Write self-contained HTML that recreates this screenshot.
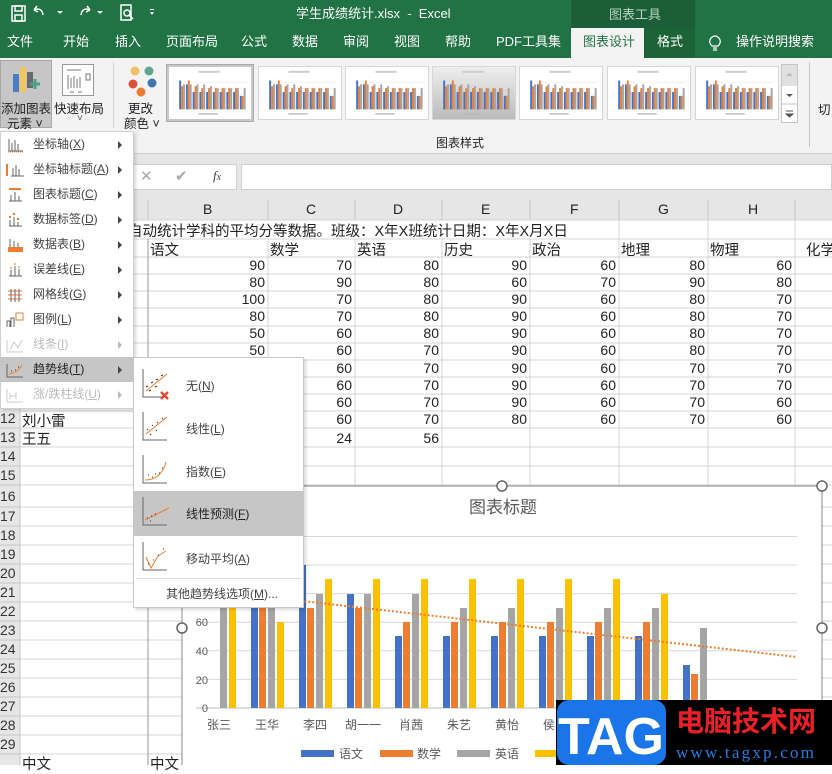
<!DOCTYPE html>
<html><head><meta charset="utf-8"><style>
*{margin:0;padding:0;box-sizing:border-box}
body{width:832px;height:765px;overflow:hidden;position:relative;background:#fff;font-family:"Liberation Sans","Noto Sans CJK SC",sans-serif;color:#222}
.a{position:absolute;white-space:nowrap}
.tab{position:absolute;top:28px;height:30px;line-height:28px;color:#fff;font-size:13px}
.mi{position:absolute;left:0;width:133px;height:25px;font-size:12px;color:#444;line-height:25px}
.mi span.t{position:absolute;left:33px}
.mi .ar{position:absolute;left:118px;top:9px;width:0;height:0;border-left:4px solid #444;border-top:4px solid transparent;border-bottom:4px solid transparent}
.mi svg{position:absolute;left:5px;top:5px}
.si{position:absolute;left:0;width:170px;height:42px;font-size:12px;color:#444}
.si span{position:absolute;left:52px;top:14px}
.si svg{position:absolute;left:8px;top:5px}
.th{position:absolute;top:66px;width:84px;height:54px;border:1px solid #d6d6d6;background:#fff}
</style></head><body>
<div class="a" style="left:0;top:0;width:832px;height:58px;background:#217346"></div>
<div class="a" style="left:571px;top:0;width:124px;height:28px;background:#1b5e37"></div>
<div class="a" style="left:609px;top:4px;font-size:13px;color:#b9d3c2">图表工具</div>
<div class="a" style="left:296px;top:3px;font-size:13px;color:#fff">学生成绩统计.xlsx &nbsp;- &nbsp;Excel</div>
<svg class="a" style="left:0;top:0" width="170" height="28">
<g stroke="#fff" fill="none" stroke-width="1.5"><rect x="12" y="6" width="13" height="15"/><rect x="15" y="6" width="7" height="5"/><rect x="15" y="15" width="7" height="6"/>
<path d="M34 10 q8 -3 9 5 M34 10 l3 -4 M34 10 l4 2"/><path d="M90 10 q-8 -3 -9 5 M90 10 l-3 -4 M90 10 l-4 2"/>
<rect x="121" y="5" width="10" height="15"/><circle cx="127" cy="13" r="3"/><path d="M129 15 l4 4"/></g>
<g fill="#fff"><path d="M57 11 l3 3 l3 -3z M97 11 l3 3 l3 -3z M150 12 l4 0 l-2 3z"/><rect x="150" y="9" width="4" height="1"/></g></svg>
<div class="a" style="left:571px;top:28px;width:73px;height:30px;background:#f3f3f3"></div>
<div class="a" style="left:644px;top:28px;width:51px;height:30px;background:#1d6338"></div>
<div class="tab" style="left:7px">文件</div><div class="tab" style="left:63px">开始</div><div class="tab" style="left:115px">插入</div>
<div class="tab" style="left:166px">页面布局</div><div class="tab" style="left:241px">公式</div><div class="tab" style="left:292px">数据</div>
<div class="tab" style="left:343px">审阅</div><div class="tab" style="left:394px">视图</div><div class="tab" style="left:445px">帮助</div>
<div class="tab" style="left:496px">PDF工具集</div><div class="tab" style="left:583px;color:#217346">图表设计</div><div class="tab" style="left:657px">格式</div>
<svg class="a" style="left:708px;top:34px" width="14" height="18"><g stroke="#fff" fill="none" stroke-width="1.2"><path d="M4 12 q-4-4 -1-8 q4-4 8 0 q3 4 -1 8z M5 14h4 M5 16h4"/></g></svg>
<div class="tab" style="left:736px">操作说明搜索</div>
<div class="a" style="left:0;top:58px;width:832px;height:96px;background:#f3f3f3"></div>
<div class="a" style="left:0;top:60px;width:52px;height:68px;background:#c6c6c6;border:1px solid #a8a8a8"></div>
<svg class="a" style="left:8px;top:62px" width="36" height="36"><rect x="5" y="12" width="6" height="18" fill="#4a7ebf"/><rect x="12" y="5" width="6" height="25" fill="#f0c75e"/><rect x="19" y="10" width="6" height="16" fill="#6a6a6a"/><path d="M22 22h10 M27 17v10" stroke="#4aa08a" stroke-width="3"/></svg>
<div class="a" style="left:1px;top:98px;font-size:12.5px">添加图表</div><div class="a" style="left:7px;top:113px;font-size:12.5px">元素 ˅</div>
<div class="a" style="left:62px;top:64px;width:32px;height:32px;background:#fff;border:1px solid #999"></div>
<svg class="a" style="left:62px;top:64px" width="32" height="32"><g stroke="#777" fill="none"><path d="M5 6h14 M6 11v14 M9 14v10 M12 12v12 M15 15v9 M18 13v11 M24 10h4v6h-4z M8 28h4 M16 28h4"/></g></svg>
<div class="a" style="left:54px;top:98px;font-size:12.5px">快速布局</div><div class="a" style="left:77px;top:113px;font-size:10px;color:#555">˅</div>
<div class="a" style="left:113px;top:62px;width:1px;height:66px;background:#d4d4d4"></div>
<svg class="a" style="left:126px;top:64px" width="34" height="34"><circle cx="9" cy="7" r="4.5" fill="#f0c068"/><circle cx="23" cy="7" r="4.5" fill="#5fa58f"/><circle cx="7" cy="20" r="4.5" fill="#d9533a"/><circle cx="26" cy="19" r="4.5" fill="#3f74b5"/><circle cx="15" cy="28" r="4.5" fill="#ed7d31"/></svg>
<div class="a" style="left:128px;top:98px;font-size:12.5px">更改</div><div class="a" style="left:124px;top:113px;font-size:12.5px">颜色 ˅</div>
<svg width="0" height="0" style="position:absolute"><defs><symbol id="tb" viewBox="0 0 84 54"><g stroke="#e4e4e4" stroke-width=".5"><path d="M8 16h72 M8 22h72 M8 28h72 M8 34h72 M8 40h72"/></g><rect x="30" y="4" width="22" height="2" fill="#ccc"/><g fill="#4472c4"><rect x="10" y="14" width="2" height="30"/><rect x="17" y="18" width="2" height="26"/><rect x="24" y="26" width="2" height="18"/><rect x="31" y="26" width="2" height="18"/><rect x="38" y="26" width="2" height="18"/><rect x="45" y="26" width="2" height="18"/><rect x="52" y="26" width="2" height="18"/><rect x="59" y="26" width="2" height="18"/><rect x="66" y="26" width="2" height="18"/><rect x="73" y="30" width="2" height="14"/></g><g fill="#ed7d31"><rect x="12" y="20" width="2" height="24"/><rect x="19" y="14" width="2" height="30"/><rect x="26" y="20" width="2" height="24"/><rect x="33" y="22" width="2" height="22"/><rect x="40" y="22" width="2" height="22"/><rect x="47" y="22" width="2" height="22"/><rect x="54" y="22" width="2" height="22"/><rect x="61" y="22" width="2" height="22"/><rect x="68" y="22" width="2" height="22"/><rect x="75" y="30" width="2" height="14"/></g><g fill="#a5a5a5"><rect x="14" y="18" width="2" height="26"/><rect x="21" y="18" width="2" height="26"/><rect x="28" y="18" width="2" height="26"/><rect x="35" y="18" width="2" height="26"/><rect x="42" y="20" width="2" height="24"/><rect x="49" y="22" width="2" height="22"/><rect x="56" y="22" width="2" height="22"/><rect x="63" y="22" width="2" height="22"/><rect x="70" y="22" width="2" height="22"/><rect x="77" y="22" width="2" height="22"/></g><rect x="30" y="48" width="20" height="1.5" fill="#bbb"/></symbol></defs></svg>
<div class="th" style="left:166px;width:88px;height:58px;top:64px;background:#c8c8c8;border-color:#aaa"></div>
<svg class="a" style="left:169px;top:67px;background:#fff" width="82" height="52"><use href="#tb"/></svg>
<svg class="th" style="left:258px"><use href="#tb"/></svg>
<svg class="th" style="left:345px"><use href="#tb"/></svg>
<svg class="th" style="left:432px;background:linear-gradient(#eee,#bbb)"><use href="#tb"/></svg>
<svg class="th" style="left:519px"><use href="#tb"/></svg>
<svg class="th" style="left:607px"><use href="#tb"/></svg>
<svg class="th" style="left:695px"><use href="#tb"/></svg>
<div class="a" style="left:781px;top:64px;width:17px;height:59px;border:1px solid #c6c6c6;background:#fff"></div>
<div class="a" style="left:782px;top:65px;width:15px;height:19px;background:#e0e0e0"></div>
<svg class="a" style="left:781px;top:64px" width="17" height="59"><path d="M5 12l3.5-3 3.5 3z" fill="#bbb"/><path d="M5 30l3.5 3 3.5-3z" fill="#555"/><path d="M5 47h7 M5 50l3.5 3 3.5-3z" stroke="#555" fill="#555"/><path d="M0 40h17 M0 21h17" stroke="#c6c6c6"/></svg>
<div class="a" style="left:809px;top:62px;width:1px;height:85px;background:#c6c6c6"></div>
<div class="a" style="left:818px;top:99px;font-size:12.5px">切</div>
<div class="a" style="left:436px;top:134px;font-size:12px">图表样式</div>
<div class="a" style="left:0;top:153px;width:832px;height:10px;background:#e6e6e6;border-top:1px solid #d0d0d0"></div>
<div class="a" style="left:0;top:163px;width:832px;height:37px;background:#e6e6e6"></div>
<div class="a" style="left:133px;top:164px;width:104px;height:26px;background:#fff;border:1px solid #d0d0d0"></div>
<div class="a" style="left:140px;top:167px;font-size:15px;color:#aaa">✕</div>
<div class="a" style="left:175px;top:167px;font-size:15px;color:#aaa">✔</div>
<div class="a" style="left:213px;top:168px;font-size:13px;font-style:italic;font-family:'Liberation Serif',serif;color:#444">f<span style="font-size:10px">x</span></div>
<div class="a" style="left:241px;top:164px;width:591px;height:26px;background:#fff;border:1px solid #d0d0d0"></div>
<div class="a" style="left:0;top:200px;width:832px;height:20px;background:#e6e6e6"></div>
<div class="a" style="left:0;top:200px;width:20px;height:565px;background:#e6e6e6"></div>
<svg class="a" style="left:0;top:0" width="832" height="765">
<g stroke="#d4d4d4" stroke-width="1">
<path d="M20 239H832 M20 257H832 M20 274H832 M20 291H832 M20 308H832 M20 326H832 M20 343H832 M20 360H832 M20 377H832 M20 394H832 M20 411H832 M20 428H832 M20 447H832 M20 466H832 M20 485H832 M20 507H832 M20 526H832 M20 545H832 M20 564H832 M20 583H832 M20 602H832 M20 621H832 M20 640H832 M20 659H832 M20 678H832 M20 697H832 M20 716H832 M20 735H832 M20 754H832"/>
<path d="M268 239V765 M355 239V765 M442 239V765 M530 239V765 M619 220V765 M708 220V765 M795 220V765 M148 239V765"/>
<path d="M20 220H832"/>
</g>
<g stroke="#c6c6c6"><path d="M148 200V220 M268 200V220 M355 200V220 M442 200V220 M530 200V220 M619 200V220 M708 200V220 M795 200V220"/>
<path d="M0 466H20 M0 485H20 M0 507H20 M0 526H20 M0 545H20 M0 564H20 M0 583H20 M0 602H20 M0 621H20 M0 640H20 M0 659H20 M0 678H20 M0 697H20 M0 716H20 M0 735H20 M0 754H20 M0 428H20 M0 447H20 M20 200V765"/></g>
<path d="M148 239V765" stroke="#9a9a9a"/>
</svg>
<div class="a" style="font-size:14px;top:201px;left:203px">B</div><div class="a" style="font-size:14px;top:201px;left:306px">C</div><div class="a" style="font-size:14px;top:201px;left:393px">D</div><div class="a" style="font-size:14px;top:201px;left:481px">E</div><div class="a" style="font-size:14px;top:201px;left:570px">F</div><div class="a" style="font-size:14px;top:201px;left:658px">G</div><div class="a" style="font-size:14px;top:201px;left:748px">H</div>
<div class="a" style="font-size:14.5px;top:220px;left:128px">自动统计学科的平均分等数据。班级：X年X班统计日期：X年X月X日</div>
<div class="a" style="font-size:14.5px;top:239px;left:150px">语文</div><div class="a" style="font-size:14.5px;top:239px;left:270px">数学</div><div class="a" style="font-size:14.5px;top:239px;left:357px">英语</div><div class="a" style="font-size:14.5px;top:239px;left:444px">历史</div><div class="a" style="font-size:14.5px;top:239px;left:532px">政治</div><div class="a" style="font-size:14.5px;top:239px;left:621px">地理</div><div class="a" style="font-size:14.5px;top:239px;left:710px">物理</div><div class="a" style="font-size:14.5px;top:239px;left:806px">化学</div>
<div class="a" style="left:148px;top:257px;width:120px;font-size:14px;text-align:right;padding-right:3px;line-height:17.1px">90<br>80<br>100<br>80<br>50<br>50</div>
<div class="a" style="left:268px;top:257px;width:87px;font-size:14px;text-align:right;padding-right:3px;line-height:17.1px">70<br>90<br>70<br>70<br>60<br>60<br>60<br>60<br>60<br>60<br><span style="line-height:20px">24</span></div>
<div class="a" style="left:355px;top:257px;width:87px;font-size:14px;text-align:right;padding-right:3px;line-height:17.1px">80<br>80<br>80<br>80<br>80<br>70<br>70<br>70<br>70<br>70<br><span style="line-height:20px">56</span></div>
<div class="a" style="left:442px;top:257px;width:88px;font-size:14px;text-align:right;padding-right:3px;line-height:17.1px">90<br>60<br>90<br>90<br>90<br>90<br>90<br>90<br>90<br>80</div>
<div class="a" style="left:530px;top:257px;width:89px;font-size:14px;text-align:right;padding-right:3px;line-height:17.1px">60<br>70<br>60<br>60<br>60<br>60<br>60<br>60<br>60<br>60</div>
<div class="a" style="left:619px;top:257px;width:89px;font-size:14px;text-align:right;padding-right:3px;line-height:17.1px">80<br>90<br>80<br>80<br>80<br>80<br>70<br>70<br>70<br>70</div>
<div class="a" style="left:708px;top:257px;width:87px;font-size:14px;text-align:right;padding-right:3px;line-height:17.1px">60<br>80<br>70<br>70<br>70<br>70<br>70<br>70<br>60<br>60</div>
<div class="a" style="left:22px;top:410px;font-size:14.5px">刘小雷</div><div class="a" style="left:22px;top:428px;font-size:14.5px">王五</div>
<div class="a" style="left:22px;top:753px;font-size:14.5px">中文</div><div class="a" style="left:150px;top:753px;font-size:14.5px">中文</div>
<div class="a" style="left:0;top:409px;font-size:14px;line-height:19px;width:20px;overflow:hidden;color:#333">12<br>13<br>14<br>15<br><span style="line-height:22px">16</span><br>17<br>18<br>19<br>20<br>21<br>22<br>23<br>24<br>25<br>26<br>27<br>28<br>29</div>
<svg class="a" style="left:0;top:0" width="832" height="765">
<rect x="182" y="486" width="640" height="290" fill="#fff" stroke="#8a8a8a"/>
<text x="503" y="513" font-size="17" fill="#595959" text-anchor="middle" font-family="Liberation Sans,Noto Sans CJK SC,sans-serif">图表标题</text>
<g stroke="#d9d9d9"><path d="M196 536.5H797 M196 565H797 M196 593.6H797 M196 622.2H797 M196 650.8H797 M196 679.4H797"/></g>
<path d="M196 708H797" stroke="#bfbfbf"/>
<g font-size="11" fill="#595959" text-anchor="end" font-family="Liberation Sans,sans-serif"><text x="208" y="712">0</text><text x="208" y="684">20</text><text x="208" y="655">40</text><text x="208" y="626">60</text></g>
<g fill="#4472c4"><rect x="251" y="594" width="7" height="114"/><rect x="299" y="565" width="7" height="143"/><rect x="347" y="594" width="7" height="114"/><rect x="395" y="636" width="7" height="72"/><rect x="443" y="636" width="7" height="72"/><rect x="491" y="636" width="7" height="72"/><rect x="539" y="636" width="7" height="72"/><rect x="587" y="636" width="7" height="72"/><rect x="635" y="636" width="7" height="72"/><rect x="683" y="665" width="7" height="43"/></g>
<g fill="#ed7d31"><rect x="259" y="579" width="7" height="129"/><rect x="307" y="608" width="7" height="100"/><rect x="355" y="608" width="7" height="100"/><rect x="403" y="622" width="7" height="86"/><rect x="451" y="622" width="7" height="86"/><rect x="499" y="622" width="7" height="86"/><rect x="547" y="622" width="7" height="86"/><rect x="595" y="622" width="7" height="86"/><rect x="643" y="622" width="7" height="86"/><rect x="691" y="674" width="7" height="34"/></g>
<g fill="#a5a5a5"><rect x="220" y="608" width="7" height="100"/><rect x="268" y="594" width="7" height="114"/><rect x="316" y="594" width="7" height="114"/><rect x="364" y="594" width="7" height="114"/><rect x="412" y="594" width="7" height="114"/><rect x="460" y="608" width="7" height="100"/><rect x="508" y="608" width="7" height="100"/><rect x="556" y="608" width="7" height="100"/><rect x="604" y="608" width="7" height="100"/><rect x="652" y="608" width="7" height="100"/><rect x="700" y="628" width="7" height="80"/></g>
<g fill="#ffc000"><rect x="229" y="608" width="7" height="100"/><rect x="277" y="622" width="7" height="86"/><rect x="325" y="579" width="7" height="129"/><rect x="373" y="579" width="7" height="129"/><rect x="421" y="579" width="7" height="129"/><rect x="469" y="579" width="7" height="129"/><rect x="517" y="579" width="7" height="129"/><rect x="565" y="579" width="7" height="129"/><rect x="613" y="579" width="7" height="129"/><rect x="661" y="594" width="7" height="114"/></g>
<path d="M205 590 L797 657" stroke="#ed7d31" stroke-width="2" stroke-dasharray="2 2"/>
<g font-size="12" fill="#595959" text-anchor="middle" font-family="Liberation Sans,Noto Sans CJK SC,sans-serif"><text x="219" y="729">张三</text><text x="267" y="729">王华</text><text x="315" y="729">李四</text><text x="363" y="729">胡一一</text><text x="411" y="729">肖茜</text><text x="459" y="729">朱艺</text><text x="507" y="729">黄怡</text><text x="555" y="729">侯小</text></g>
<rect x="301" y="750" width="33" height="7" fill="#4472c4"/><rect x="380" y="750" width="33" height="7" fill="#ed7d31"/><rect x="457" y="750" width="33" height="7" fill="#a5a5a5"/><rect x="535" y="750" width="33" height="7" fill="#ffc000"/>
<g font-size="12" fill="#595959" font-family="Liberation Sans,Noto Sans CJK SC,sans-serif"><text x="339" y="758">语文</text><text x="417" y="758">数学</text><text x="495" y="758">英语</text></g>
<g fill="#fff" stroke="#666" stroke-width="1.5"><circle cx="502" cy="486" r="5"/><circle cx="822" cy="486" r="5"/><circle cx="182" cy="628" r="5"/><circle cx="822" cy="628" r="5"/></g>
<rect x="556" y="700" width="276" height="65" fill="#000"/>
<rect x="557" y="700" width="109" height="65" rx="12" fill="#1a75e8"/>
<text x="611" y="754" font-size="52" font-weight="bold" fill="#fff" text-anchor="middle" font-family="Liberation Sans,sans-serif">TAG</text>
<text x="676" y="731" font-size="28" font-weight="bold" fill="#e8202a" font-family="Noto Sans CJK SC,sans-serif">电脑技术网</text>
<text x="676" y="758" font-size="17" fill="#2a7de0" font-family="Liberation Serif,serif" textLength="138">www.tagxp.com</text>
</svg>
<div class="a" style="left:0;top:131px;width:134px;height:278px;background:#fff;border:1px solid #d0d0d0;box-shadow:2px 2px 3px rgba(0,0,0,.15)"></div>
<div class="mi" style="top:132px"><svg width="20" height="16"><path d="M4 2v12h14 M7 6v8 M10 3v11 M13 7v7" stroke="#666" fill="none"/><path d="M3 15h15" stroke="#ed7d31" stroke-dasharray="1 1"/></svg><span class="t">坐标轴(<u>X</u>)</span><i class="ar"></i></div>
<div class="mi" style="top:157px"><svg width="20" height="16"><path d="M2 2v12" stroke="#ed7d31" stroke-width="2"/><path d="M6 14h13 M8 6v8 M11 3v11 M14 7v7" stroke="#666" fill="none"/></svg><span class="t">坐标轴标题(<u>A</u>)</span><i class="ar"></i></div>
<div class="mi" style="top:182px"><svg width="20" height="16"><path d="M4 2h12" stroke="#ed7d31" stroke-width="2"/><path d="M4 14h13 M6 8v6 M10 5v9 M14 9v5" stroke="#666" fill="none"/></svg><span class="t">图表标题(<u>C</u>)</span><i class="ar"></i></div>
<div class="mi" style="top:207px"><svg width="20" height="16"><path d="M5 4v2 M9 1v2 M13 6v2" stroke="#ed7d31" stroke-width="2"/><path d="M4 14h13 M5 8v6 M9 5v9 M13 10v4" stroke="#666" fill="none"/></svg><span class="t">数据标签(<u>D</u>)</span><i class="ar"></i></div>
<div class="mi" style="top:232px"><svg width="20" height="16"><path d="M3 10h15v5H3z" fill="#ed7d31"/><path d="M5 10V2 M9 10V4 M13 10V6" stroke="#666"/></svg><span class="t">数据表(<u>B</u>)</span><i class="ar"></i></div>
<div class="mi" style="top:257px"><svg width="20" height="16"><path d="M4 14h13 M6 8v6 M10 4v10 M14 7v7" stroke="#666" fill="none"/><path d="M5 6h2 M9 2h2 M13 5h2" stroke="#ed7d31"/></svg><span class="t">误差线(<u>E</u>)</span><i class="ar"></i></div>
<div class="mi" style="top:282px"><svg width="20" height="16"><path d="M3 4h14 M3 8h14 M3 12h14" stroke="#ed7d31"/><path d="M6 2v13 M10 2v13 M14 2v13" stroke="#666"/></svg><span class="t">网格线(<u>G</u>)</span><i class="ar"></i></div>
<div class="mi" style="top:307px"><svg width="20" height="16"><path d="M2 15V9h3v6 M6 15V6h3v9" stroke="#666" fill="none"/><rect x="11" y="1" width="7" height="7" fill="#fff" stroke="#ed7d31"/></svg><span class="t">图例(<u>L</u>)</span><i class="ar"></i></div>
<div class="mi" style="top:332px;color:#bbb"><svg width="20" height="16"><path d="M2 3v12h16 M5 13l4-8 4 6 4-8" stroke="#ccc" fill="none"/></svg><span class="t">线条(<u>I</u>)</span><i class="ar" style="border-left-color:#bbb"></i></div>
<div class="mi" style="top:357px;background:#c6c6c6"><svg width="20" height="16"><path d="M2 2v13h16" stroke="#666" fill="none"/><path d="M4 12q8-1 13-9" stroke="#ed7d31" fill="none"/><path d="M6 9h1 M10 8h1 M13 5h1" stroke="#333"/></svg><span class="t" style="color:#222">趋势线(<u>T</u>)</span><i class="ar"></i></div>
<div class="mi" style="top:382px;color:#bbb"><svg width="20" height="16"><path d="M2 2v13h16 M5 6v6 M11 5v7 M5 9h6" stroke="#ccc" fill="none"/></svg><span class="t">涨/跌柱线(<u>U</u>)</span><i class="ar" style="border-left-color:#bbb"></i></div>
<div class="a" style="left:133px;top:357px;width:171px;height:251px;background:#fff;border:1px solid #c8c8c8;box-shadow:2px 2px 3px rgba(0,0,0,.15)">
<div class="si" style="top:5px"><svg width="32" height="34"><path d="M1 1v28h24" stroke="#666" fill="none"/><path d="M4 23L25 6" stroke="#ed7d31"/><path d="M4 19l2-1 M9 15l2-1 M14 12l2-1 M19 8l2-1 M7 23l2-1 M13 19l2-1" stroke="#333"/><path d="M19 24l7 7 M26 24l-7 7" stroke="#e04b33" stroke-width="2.5"/></svg><span>无(<u>N</u>)</span></div>
<div class="si" style="top:48px"><svg width="32" height="34"><path d="M1 1v28h24" stroke="#666" fill="none"/><path d="M4 23L25 6" stroke="#ed7d31"/><path d="M5 19l1-1 M10 15l1-1 M15 12l1-1 M20 8l1-1 M8 24l1-1 M14 20l1-1" stroke="#333"/></svg><span>线性(<u>L</u>)</span></div>
<div class="si" style="top:91px"><svg width="32" height="34"><path d="M1 1v28h24" stroke="#666" fill="none"/><path d="M3 26q16 0 21-18" stroke="#ed7d31" fill="none"/><path d="M6 21h1 M10 23h1 M13 20h1 M17 19h1 M20 14h1" stroke="#333"/></svg><span>指数(<u>E</u>)</span></div>
<div class="si" style="top:133px;left:0;width:169px;height:45px;background:#c6c6c6"><svg width="32" height="34"><path d="M1 1v28h24" stroke="#666" fill="none"/><path d="M3 24L27 12" stroke="#ed7d31"/><path d="M5 22h1 M9 20h1 M13 18h1 M8 25h1" stroke="#333"/></svg><span style="color:#222">线性预测(<u>F</u>)</span></div>
<div class="si" style="top:178px"><svg width="32" height="34"><path d="M1 1v28h24" stroke="#666" fill="none"/><path d="M4 16l5 11 7-12 8-5" stroke="#ed7d31" fill="none"/><path d="M6 23h1 M11 19h1 M16 14h1 M21 8h1" stroke="#333"/></svg><span>移动平均(<u>A</u>)</span></div>
<div class="a" style="left:2px;top:220px;width:165px;height:1px;background:#ddd"></div>
<div class="a" style="left:32px;top:227px;font-size:12px;color:#444">其他趋势线选项(<u>M</u>)...</div>
</div>
</body></html>
